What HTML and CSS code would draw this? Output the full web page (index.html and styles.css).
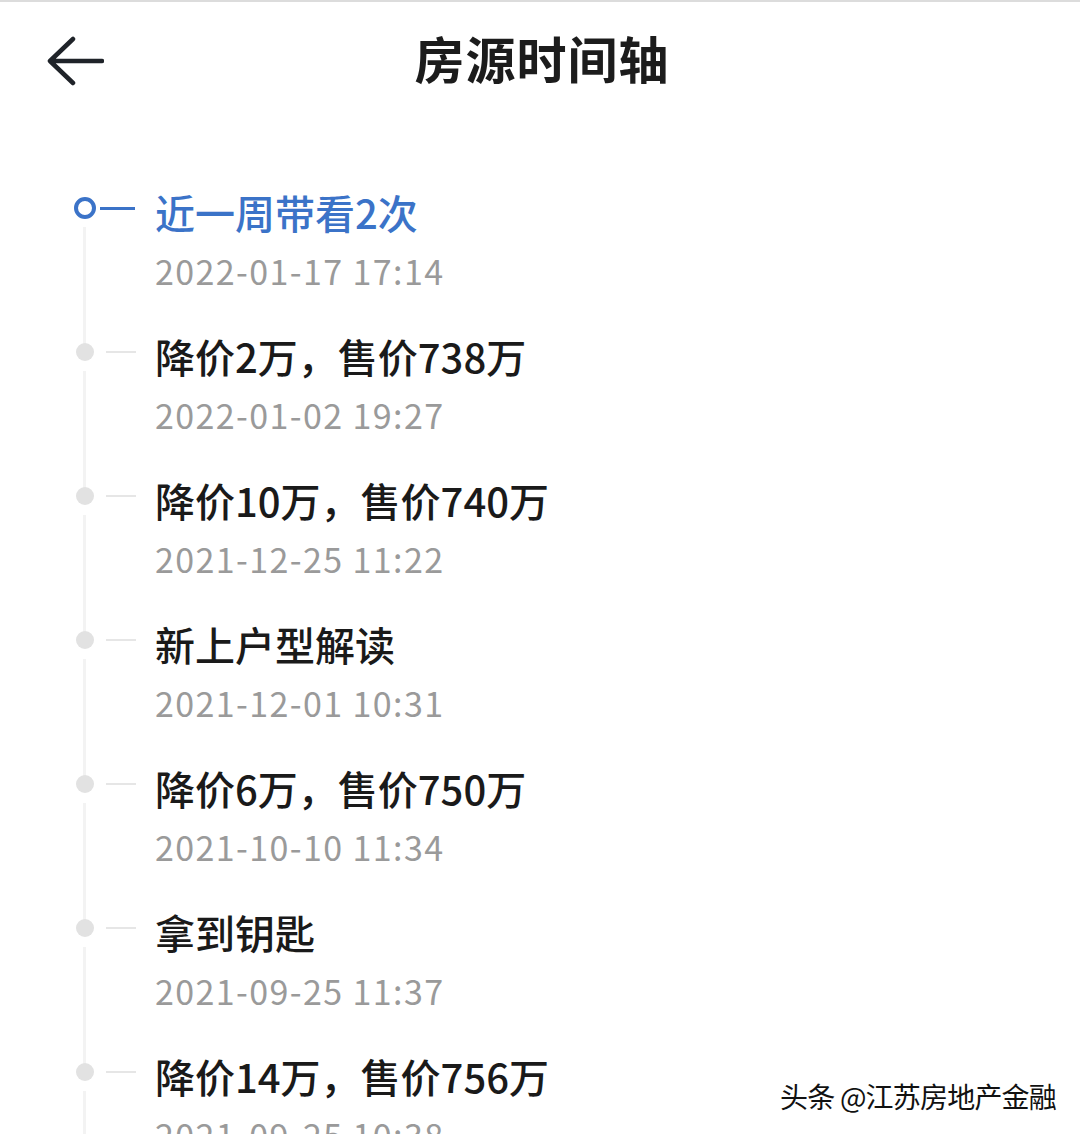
FILE: index.html
```html
<!DOCTYPE html>
<html lang="zh">
<head>
<meta charset="utf-8">
<title>房源时间轴</title>
<link rel="stylesheet" href="styles.css">
</head>
<body>
<div class="page">
  <header class="topbar">
    <div class="back">
      <svg width="58" height="50" viewBox="0 0 58 50"><path d="M27 3 L4 25 L27 47 M4 25 H56" fill="none" stroke="#1f2329" stroke-width="4.5" stroke-linecap="round" stroke-linejoin="round"/></svg>
    </div>
    <h1 class="title">房源时间轴</h1>
    <div></div>
  </header>
  <ul class="timeline">
    <li class="item active"><div class="marker"><span class="dot"></span><span class="dash"></span></div><div class="content"><div class="event">近一周带看2次</div><div class="date">2022-01-17 17:14</div></div></li>
    <li class="item"><div class="marker"><span class="dot"></span><span class="dash"></span></div><div class="content"><div class="event">降价2万，售价738万</div><div class="date">2022-01-02 19:27</div></div></li>
    <li class="item"><div class="marker"><span class="dot"></span><span class="dash"></span></div><div class="content"><div class="event">降价10万，售价740万</div><div class="date">2021-12-25 11:22</div></div></li>
    <li class="item"><div class="marker"><span class="dot"></span><span class="dash"></span></div><div class="content"><div class="event">新上户型解读</div><div class="date">2021-12-01 10:31</div></div></li>
    <li class="item"><div class="marker"><span class="dot"></span><span class="dash"></span></div><div class="content"><div class="event">降价6万，售价750万</div><div class="date">2021-10-10 11:34</div></div></li>
    <li class="item"><div class="marker"><span class="dot"></span><span class="dash"></span></div><div class="content"><div class="event">拿到钥匙</div><div class="date">2021-09-25 11:37</div></div></li>
    <li class="item"><div class="marker"><span class="dot"></span><span class="dash"></span></div><div class="content"><div class="event">降价14万，售价756万</div><div class="date">2021-09-25 10:38</div></div></li>
  </ul>
  <div class="watermark">头条 @江苏房地产金融</div>
</div>
</body>
</html>
```
FILE: styles.css
```css
html, body {
  margin: 0;
  padding: 0;
  background: #fff;
  height: 1134px;
  overflow: hidden;
}
.page {
  position: relative;
  height: 1134px;
  overflow: hidden;
  border-top: 2px solid #dcdcdc;
  box-sizing: border-box;
  font-family: "Noto Sans CJK SC", "Noto Sans", sans-serif;
}
.topbar {
  display: grid;
  grid-template-columns: 200px 1fr 200px;
  align-items: center;
  height: 120px;
}
.back {
  padding-left: 46px;
  display: flex;
  align-items: center;
  margin-top: -2px;
}
.title {
  margin: 0;
  text-align: center;
  font-size: 50px;
  font-weight: 700;
  color: #1c1c1c;
  letter-spacing: 1px;
  margin-left: 4px;
  margin-top: -10px;
}
.timeline {
  list-style: none;
  margin: 0;
  padding: 0 0 0 72px;
  margin-top: 65px;
}
.item {
  position: relative;
  display: flex;
  height: 144px;
}
.item::before {
  content: "";
  position: absolute;
  left: 11px;
  top: 40px;
  width: 3px;
  height: 130px;
  background: #f3f3f3;
}
.marker {
  width: 83px;
  height: 56px;
  display: flex;
  align-items: center;
  margin-top: -7px;
}
.dot {
  width: 18px;
  height: 18px;
  border-radius: 50%;
  background: #e2e2e2;
  margin-left: 4px;
  flex: none;
}
.dash {
  width: 30px;
  height: 2px;
  background: #e6e6e6;
  margin-left: 12px;
}
.active .dot {
  width: 14px;
  height: 14px;
  background: #fff;
  border: 4px solid #3b73c8;
  margin-left: 2px;
}
.active .dash {
  background: #3b73c8;
  height: 3px;
  margin-left: 4px;
  width: 35px;
}
.content {
  display: flex;
  flex-direction: column;
}
.event {
  font-size: 40px;
  line-height: 56px;
  font-weight: 500;
  color: #1a1a1a;
  margin-top: -3px;
}
.active .event {
  color: #3b73c8;
}
.date {
  font-size: 34px;
  line-height: 56px;
  color: #9a9a9a;
  letter-spacing: 1.4px;
  margin-top: 3px;
}
.watermark {
  position: absolute;
  right: 24px;
  top: 1074px;
  font-size: 28px;
  color: #111;
  text-shadow: 0 0 2px #fff, 0 0 2px #fff;
  letter-spacing: -0.8px;
}
```
